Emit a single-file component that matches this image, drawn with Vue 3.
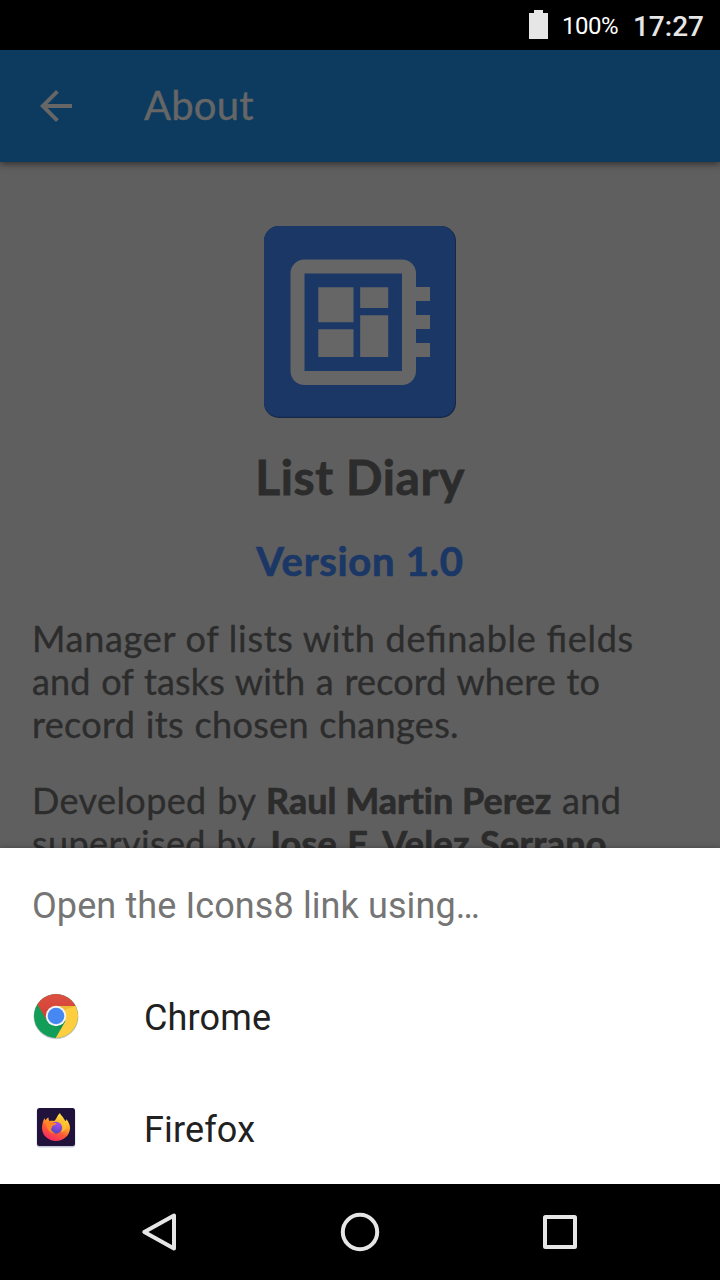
<script setup>
const intro = [
  { text: 'Manager of lists with definable fields', cls: 'l1' },
  { text: 'and of tasks with a record where to', cls: 'l2' },
  { text: 'record its chosen changes.', cls: 'l3' },
]
</script>

<template>
  <div class="screen">
    <div class="status">
      <svg class="battery" width="19" height="29" viewBox="0 0 19 29"><path d="M5 0h9v3h5v26H0V3h5z" fill="#e6e6e6" /></svg>
      <span class="pct">100%</span>
      <span class="clock">17:27</span>
    </div>

    <header class="appbar">
      <svg width="48" height="48" viewBox="0 0 24 24"><path d="M20 11H7.83l5.59-5.59L12 4l-8 8 8 8 1.41-1.41L7.83 13H20v-2z" fill="#666" /></svg>
      <h1>About</h1>
    </header>

    <main class="content">
      <svg class="logo" width="192" height="192" viewBox="0 0 192 192">
        <rect width="192" height="192" rx="15" fill="#142849" />
        <rect width="191" height="190.8" rx="15" fill="#1b3766" />
        <path fill="#666" fill-rule="evenodd" d="M40.5 33.5H138a14 14 0 0 1 14 14V61h14v14h-14v14h14v14h-14v14h14v14h-14v14a14 14 0 0 1-14 14H40.5a14 14 0 0 1-14-14V47.500a14 14 0 0 1 14-14zM40.500 47.500V145H138V47.500z" />
        <path fill="#666" d="M54.300 61.200h35.200v35h-35.200zM54.300 103.200h35.200v27.800h-35.200zM96.200 61.200h28v20.800h-28zM96.200 89.200h28v41.800h-28z" />
      </svg>
      <h2>List Diary</h2>
      <h3>Version 1.0</h3>
      <p>
        <span v-for="l in intro" :key="l.cls" class="line" :class="l.cls">{{ l.text }}</span>
      </p>
      <p>
        <span class="line l4">Developed by <b>Raul Martin Perez</b> and</span>
        <span class="line l5">supervised by <b>Jose F. Velez Serrano</b></span>
      </p>
    </main>

    <section class="sheet">
      <div class="title">Open the Icons8 link using…</div>
      <div class="row">
        <svg width="48" height="48" viewBox="0 0 48 48">
          <defs>
            <clipPath id="disc"><circle cx="24" cy="24" r="22" /></clipPath>
            <linearGradient id="redShade" x1="0" y1="0" x2="0" y2="1"><stop offset="0" stop-color="#dd5144" /><stop offset="1" stop-color="#d23f31" /></linearGradient>
          </defs>
          <circle cx="24" cy="24.700" r="22.500" fill="#000" opacity=".2" />
          <g clip-path="url(#disc)">
            <rect width="48" height="48" fill="#129d59" />
            <path d="M24 14h24v34H22.500L33.500 29z" fill="#ffcd40" />
            <path d="M0 0h48v14H24l-9.200 14.300L4.500 11z" fill="url(#redShade)" />
            <path d="M24 14h20l-12 4z" fill="#b98a18" opacity=".25" />
            <path d="M33 29l-9 5-2 .5 7 2.500z" fill="#0b6b3c" opacity=".2" />
          </g>
          <circle cx="24" cy="24" r="10.200" fill="#f4f4f4" />
          <circle cx="24" cy="24" r="8.300" fill="#4688f1" />
        </svg>
        <span>Chrome</span>
      </div>
      <div class="row">
        <svg width="48" height="48" viewBox="0 0 48 48">
          <defs>
            <linearGradient id="fire" x1=".8" y1="0" x2=".3" y2="1"><stop offset="0" stop-color="#fff04a" /><stop offset=".38" stop-color="#ffb02c" /><stop offset=".65" stop-color="#ff5a35" /><stop offset="1" stop-color="#f42668" /></linearGradient>
            <radialGradient id="globe" cx=".65" cy=".2" r=".8"><stop offset="0" stop-color="#a34cf5" /><stop offset="1" stop-color="#5146bd" /></radialGradient>
          </defs>
          <rect x="4.700" y="5" width="38.600" height="38.500" rx="3" fill="#8b93b8" opacity=".5" />
          <rect x="5" y="4" width="38" height="38" rx="2.500" fill="#20123a" />
          <g transform="translate(0 -1)">
            <path d="M12.500 15c.2 1 .5 1.800 1 2.500.5-1.500 1.500-2.500 3-3-.1 1.500.2 2.800 1 3.500 1.500-.5 3-.4 4.500 0 1.300-.8 1.500-1.700 2.500-3 1-2.300 2.200-3.700 3.500-5 .3 2.300 3 3.300 4 6 .7.500.9 1 1 2 1.500-.2 1.200-1.300 1.500-1.700 2 2.700 3.500 5.700 3.500 8.700-.2 7.500-6.500 13-14 13S10 32.500 10 25c0-3.500 1-7 2.500-10z" fill="url(#fire)" />
            <circle cx="24" cy="24.800" r="6" fill="url(#globe)" />
            <path d="M13.500 19c2.800-1.800 5-1 7.500.7l3.600.3c-.5 2-2.500 2.100-4.100 3-.5.8-.5 2-1.500 3 .6 2 2 3.700 4.500 4-4.300 1-9-2-10-11z" fill="#ff8428" />
            <path d="M23 18.500c3-1 6 .3 7.300 3 1.200 2.700.4 6-1.800 7.700 4.500-.7 6.500-4.500 5.500-8.200-1.200-2.800-3-4-4.500-6-1.500 2-3 3-6.500 3.500z" fill="#ffc42e" opacity=".8" />
          </g>
        </svg>
        <span>Firefox</span>
      </div>
    </section>

    <nav class="nav">
      <svg width="480" height="96" viewBox="0 0 480 96" fill="none" stroke="#e6e6e6" stroke-width="4" stroke-linejoin="round">
        <path d="M54 31.500v33L24.300 48z" />
        <circle cx="240" cy="48" r="17.200" />
        <rect x="425" y="33" width="30" height="30" rx=".5" />
      </svg>
    </nav>
  </div>
</template>

<style>
body { margin: 0; background: #000; }
</style>

<style scoped>
.screen { width: 720px; height: 1280px; display: flex; flex-direction: column; overflow: hidden; background: #5f5f5f; font-family: Roboto, sans-serif; }
.status { flex: none; height: 50px; box-sizing: border-box; padding-right: 16px; background: #000; display: flex; justify-content: flex-end; align-items: center; color: #fff; line-height: 46px; }
.battery { margin: 0 14px 1px 0; }
.pct { font-size: 24px; width: 57px; letter-spacing: -.5px; margin-right: 14px; padding-top: 2px; }
.clock { font-size: 28px; font-weight: 500; color: #e6e6e6; padding-top: 4px; }
.appbar { flex: none; height: 112px; background: #0d3b5f; display: flex; align-items: center; padding-left: 32px; gap: 64px; box-shadow: 0 2px 7px rgba(0, 0, 0, .5); }
h1, h2, h3, p { margin: 0; font-family: Lato, sans-serif; font-feature-settings: "liga" 1; }
h1 { font-size: 40px; font-weight: 400; line-height: 48px; color: #666; margin-bottom: 2px; letter-spacing: .2px; -webkit-text-stroke: .4px; }
.content { flex: 1; min-height: 0; overflow: hidden; padding: 0 32px; color: #2c2c2c; display: flex; flex-direction: column; margin-top: 8px; padding-top: 56px; }
.logo { align-self: center; flex: none; }
h2 { flex: none; margin-top: 29px; text-align: center; font-size: 48px; line-height: 60px; letter-spacing: .6px; -webkit-text-stroke: .8px; }
h3 { flex: none; margin-top: 29px; text-align: center; font-size: 40px; line-height: 50px; letter-spacing: .7px; color: #1b3766; -webkit-text-stroke: .7px; }
p { flex: none; margin-top: 31px; font-size: 36px; line-height: 43px; -webkit-text-stroke: .35px; }
p + p { margin-top: 33px; }
b { font-feature-settings: "liga" 0; -webkit-text-stroke: .7px; }
.line { display: block; white-space: nowrap; }
.l1 { letter-spacing: .7px; word-spacing: .1px; }
.l2 { letter-spacing: .17px; word-spacing: 1.100px; }
.l3 { letter-spacing: .35px; word-spacing: .9px; }
.l4, .l5 { letter-spacing: .4px; word-spacing: 1px; }
.l4 b { letter-spacing: 0; word-spacing: 0; }
.l5 b { letter-spacing: .3px; }
.sheet { flex: none; height: 336px; background: #fff; box-shadow: 0 0 6px rgba(0, 0, 0, .3); position: relative; font-size: 36px; color: #212121; }
.title { height: 112px; box-sizing: border-box; padding: 2px 0 0 32px; line-height: 112px; letter-spacing: .1px; color: #757575; }
.row { height: 112px; display: flex; align-items: center; padding-left: 32px; gap: 64px; }
.row span { padding-top: 4px; letter-spacing: .15px; }
.nav { flex: none; height: 96px; background: #000; display: flex; justify-content: center; position: relative; }
</style>
